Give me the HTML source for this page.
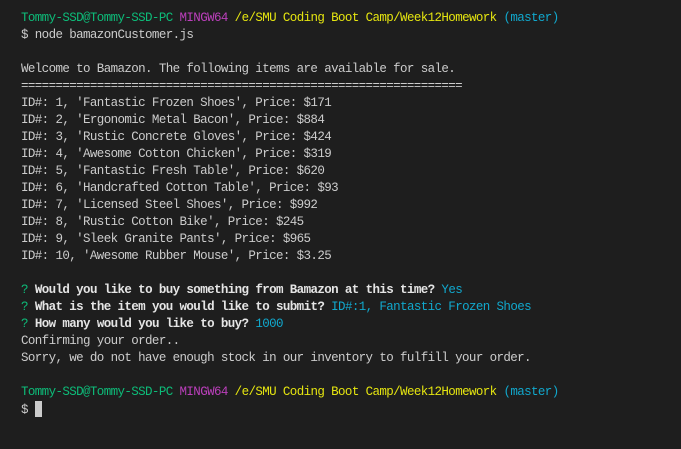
<!DOCTYPE html>
<html><head><style>
html,body{margin:0;padding:0;background:#1e1e1e;}
body{width:681px;height:449px;overflow:hidden;}
pre{margin:0;position:absolute;left:21px;top:10px;font-family:"Liberation Mono",monospace;font-size:12.5px;letter-spacing:-0.61px;line-height:17px;color:#cccccc;white-space:pre;}
.g{color:#0dbc79}.m{color:#bc3fbc}.y{color:#e5e510}.c{color:#11a8cd}.b{font-weight:bold;color:#e5e5e5}
.cur{display:inline-block;width:7px;height:16px;background:#cccccc;vertical-align:-4px;}
</style></head><body>
<pre><span class="g">Tommy-SSD@Tommy-SSD-PC</span> <span class="m">MINGW64</span> <span class="y">/e/SMU Coding Boot Camp/Week12Homework</span> <span class="c">(master)</span>
$ node bamazonCustomer.js

Welcome to Bamazon. The following items are available for sale.
================================================================
ID#: 1, 'Fantastic Frozen Shoes', Price: $171
ID#: 2, 'Ergonomic Metal Bacon', Price: $884
ID#: 3, 'Rustic Concrete Gloves', Price: $424
ID#: 4, 'Awesome Cotton Chicken', Price: $319
ID#: 5, 'Fantastic Fresh Table', Price: $620
ID#: 6, 'Handcrafted Cotton Table', Price: $93
ID#: 7, 'Licensed Steel Shoes', Price: $992
ID#: 8, 'Rustic Cotton Bike', Price: $245
ID#: 9, 'Sleek Granite Pants', Price: $965
ID#: 10, 'Awesome Rubber Mouse', Price: $3.25

<span class="g">?</span> <span class="b">Would you like to buy something from Bamazon at this time?</span> <span class="c">Yes</span>
<span class="g">?</span> <span class="b">What is the item you would like to submit?</span> <span class="c">ID#:1, Fantastic Frozen Shoes</span>
<span class="g">?</span> <span class="b">How many would you like to buy?</span> <span class="c">1000</span>
Confirming your order..
Sorry, we do not have enough stock in our inventory to fulfill your order.

<span class="g">Tommy-SSD@Tommy-SSD-PC</span> <span class="m">MINGW64</span> <span class="y">/e/SMU Coding Boot Camp/Week12Homework</span> <span class="c">(master)</span>
$ <span class="cur"></span></pre>
</body></html>
